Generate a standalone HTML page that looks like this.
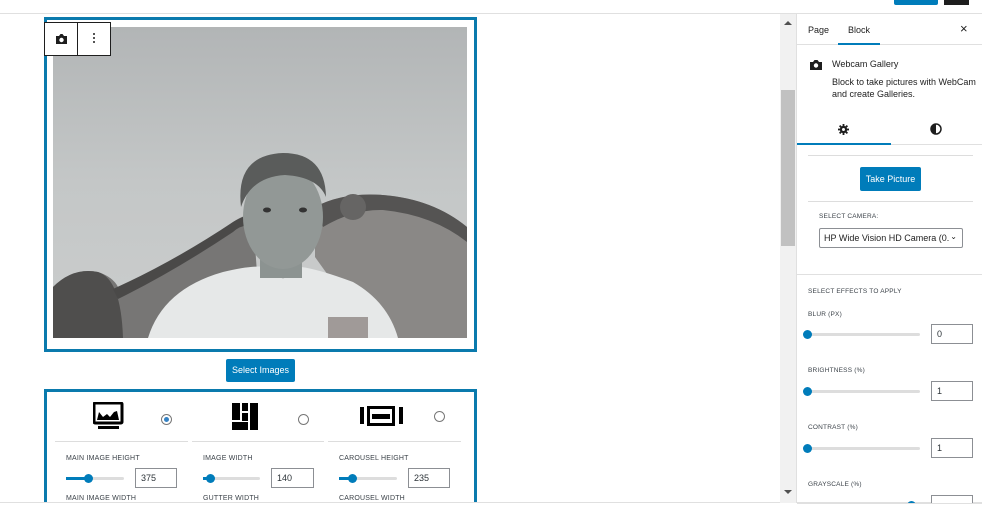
<!DOCTYPE html>
<html><head><style>
*{box-sizing:border-box;margin:0;padding:0}
html,body{width:982px;height:513px;overflow:hidden}
body{background:#fff;font-family:"Liberation Sans",sans-serif;position:relative;color:#1e1e1e}
.a{position:absolute}
.lbl{font-size:7px;color:#3c434a;letter-spacing:.2px}
.inp{position:absolute;border:1px solid #8c8f94;background:#fff;font-size:9px;padding:4px 0 0 5px;color:#2c3338}
.track{position:absolute;height:3px;background:#ddd;border-radius:2px}
.dot{position:absolute;width:9px;height:9px;border-radius:50%;background:#007cba}
.fill{position:absolute;height:3px;background:#007cba}
</style></head><body>
<div class="a" style="left:0;top:13px;width:982px;height:1px;background:#e0e0e0"></div>
<div class="a" style="left:894px;top:0;width:44px;height:5px;background:#007cba;border-radius:0 0 2px 2px"></div>
<div class="a" style="left:944px;top:0;width:25px;height:5px;background:#1e1e1e"></div>

<div class="a" style="left:44px;top:17px;width:433px;height:335px;border:3px solid #0a7aad"></div>
<div class="a" style="left:53px;top:27px;width:414px;height:311px;background:linear-gradient(#b2b5b6,#c4c7c7 50%,#cbcdcd);overflow:hidden">
 <svg width="414" height="311" viewBox="0 0 414 311">
  <path d="M0 311 L0 260 Q20 240 45 245 Q60 250 65 260 Q120 240 180 195 Q195 185 200 190 L205 260 L110 311Z" fill="#777675"/>
  <path d="M0 311 L0 260 Q20 240 45 245 Q68 252 70 311Z" fill="#4f4e4d"/>
  <path d="M60 262 Q120 235 180 195 Q195 186 200 190 L200 200 Q190 196 180 205 Q120 245 65 272Z" fill="#4a4948"/>
  <path d="M262 180 Q290 165 330 168 Q380 172 414 200 L414 311 L320 311 L262 230Z" fill="#8a8886"/>
  <path d="M262 180 Q290 165 330 168 Q380 172 414 200 L414 215 Q380 188 330 183 Q300 182 270 200Z" fill="#555453"/>
  <circle cx="300" cy="180" r="13" fill="#666564"/>
  <path d="M95 311 Q110 262 170 245 Q200 238 212 240 L230 252 L248 240 Q265 242 300 255 Q335 275 345 311Z" fill="#e6e8e8"/>
  <rect x="207" y="225" width="42" height="26" fill="#8c9391"/>
  <ellipse cx="230" cy="190" rx="40" ry="52" fill="#929896"/>
  <path d="M188 180 Q182 128 230 126 Q272 126 273 170 Q265 150 232 148 Q198 150 188 180Z" fill="#5a5c5b"/>
  <ellipse cx="214" cy="183" rx="4" ry="2.5" fill="#333"/><ellipse cx="250" cy="183" rx="4" ry="2.5" fill="#333"/>
  <rect x="275" y="290" width="40" height="21" fill="#a09a98"/>
 </svg>
</div>
<div class="a" style="left:44px;top:22px;width:67px;height:34px;border:1px solid #1e1e1e;background:#fff"></div>
<div class="a" style="left:77px;top:22px;width:1px;height:34px;background:#1e1e1e"></div>
<svg class="a" style="left:55px;top:33px" width="13" height="12" viewBox="0 0 13 12"><path d="M1 3h3l1.5-2h2L9 3h3v8H1z" fill="#1e1e1e"/><circle cx="6.5" cy="7" r="2.2" fill="#fff"/></svg>
<div class="a" style="left:93px;top:33px;width:2px;height:2px;background:#555;box-shadow:0 4px #555,0 8px #555"></div>

<div class="a" style="left:226px;top:359px;width:69px;height:23px;background:#007cba;border-radius:2px;color:#fff;font-size:9px;text-align:center;line-height:23px">Select Images</div>

<div class="a" style="left:44px;top:389px;width:433px;height:130px;border:3px solid #0a7aad"></div>
<svg class="a" style="left:93px;top:402px" width="31" height="30" viewBox="0 0 31 30"><rect x="1" y="1" width="28" height="20" rx="1" fill="none" stroke="#000" stroke-width="3"/><path d="M4 18 L6 10 L10 15 L14 12 L17 15 L21 10 L24 9 L26 18Z" fill="#000"/><rect x="5" y="24" width="21" height="3" fill="#000"/></svg>
<svg class="a" style="left:231px;top:403px" width="28" height="28" viewBox="0 0 28 28"><rect x="1" y="0" width="8" height="17" fill="#000"/><rect x="11" y="0" width="6" height="8" fill="#000"/><rect x="11" y="10" width="6" height="8" fill="#000"/><rect x="19" y="0" width="8" height="27" fill="#000"/><rect x="1" y="19" width="16" height="8" fill="#000"/></svg>
<svg class="a" style="left:360px;top:406px" width="44" height="21" viewBox="0 0 44 21"><rect x="0" y="1" width="4" height="17" fill="#000"/><rect x="7" y="0" width="28" height="20" fill="#000"/><rect x="10" y="3" width="22" height="14" fill="#fff"/><rect x="12" y="8" width="18" height="5" fill="#000"/><rect x="39" y="1" width="4" height="17" fill="#000"/></svg>
<div class="a" style="left:161px;top:414px;width:11px;height:11px;border:1px solid #777;border-radius:50%;background:#fff"><div style="position:absolute;left:2px;top:2px;width:5px;height:5px;border-radius:50%;background:#3582c4"></div></div>
<div class="a" style="left:298px;top:414px;width:11px;height:11px;border:1px solid #777;border-radius:50%"></div>
<div class="a" style="left:434px;top:411px;width:11px;height:11px;border:1px solid #777;border-radius:50%"></div>
<div class="a" style="left:55px;top:441px;width:133px;height:1px;background:#ddd"></div>
<div class="a" style="left:192px;top:441px;width:132px;height:1px;background:#ddd"></div>
<div class="a" style="left:328px;top:441px;width:133px;height:1px;background:#ddd"></div>

<div class="a lbl" style="left:66px;top:455px">MAIN IMAGE HEIGHT</div>
<div class="track" style="left:66px;top:477px;width:58px"></div><div class="fill" style="left:66px;top:477px;width:22px"></div><div class="dot" style="left:84px;top:474px"></div>
<div class="inp" style="left:135px;top:468px;width:42px;height:20px">375</div>
<div class="a lbl" style="left:66px;top:495px">MAIN IMAGE WIDTH</div>

<div class="a lbl" style="left:203px;top:455px">IMAGE WIDTH</div>
<div class="track" style="left:203px;top:477px;width:57px"></div><div class="fill" style="left:203px;top:477px;width:8px"></div><div class="dot" style="left:206px;top:474px"></div>
<div class="inp" style="left:271px;top:468px;width:43px;height:20px">140</div>
<div class="a lbl" style="left:203px;top:495px">GUTTER WIDTH</div>

<div class="a lbl" style="left:339px;top:455px">CAROUSEL HEIGHT</div>
<div class="track" style="left:339px;top:477px;width:58px"></div><div class="fill" style="left:339px;top:477px;width:12px"></div><div class="dot" style="left:348px;top:474px"></div>
<div class="inp" style="left:408px;top:468px;width:42px;height:20px">235</div>
<div class="a lbl" style="left:339px;top:495px">CAROUSEL WIDTH</div>

<div class="a" style="left:0;top:502px;width:982px;height:11px;background:#fff;border-top:1px solid #e0e0e0"></div>

<div class="a" style="left:780px;top:14px;width:16px;height:489px;background:#f1f1f1"></div>
<div class="a" style="left:781px;top:90px;width:14px;height:156px;background:#c1c1c1"></div>
<div class="a" style="left:784px;top:21px;width:0;height:0;border-left:4px solid transparent;border-right:4px solid transparent;border-bottom:4px solid #505050"></div>
<div class="a" style="left:784px;top:490px;width:0;height:0;border-left:4px solid transparent;border-right:4px solid transparent;border-top:4px solid #505050"></div>

<div class="a" style="left:796px;top:14px;width:1px;height:489px;background:#e0e0e0"></div>
<div class="a" style="left:808px;top:25px;font-size:9px">Page</div>
<div class="a" style="left:848px;top:25px;font-size:9px">Block</div>
<div class="a" style="left:797px;top:44px;width:185px;height:1px;background:#e0e0e0"></div>
<div class="a" style="left:838px;top:43px;width:42px;height:2px;background:#007cba"></div>
<div class="a" style="left:960px;top:21px;font-size:13px">×</div>
<svg class="a" style="left:810px;top:59px" width="12" height="11" viewBox="0 0 12 11"><path d="M0 3h3l1.5-2h3L9 3h3v8H0z" fill="#1e1e1e"/><circle cx="6" cy="6.5" r="2.2" fill="#fff"/></svg>
<div class="a" style="left:832px;top:59px;font-size:9px">Webcam Gallery</div>
<div class="a" style="left:832px;top:76px;font-size:9px;line-height:12px;width:145px">Block to take pictures with WebCam and create Galleries.</div>
<svg class="a" style="left:838px;top:124px" width="11" height="11" viewBox="0 0 12 12"><g fill="#1e1e1e"><circle cx="6" cy="6" r="4"/><rect x="5" y="0" width="2" height="12"/><rect x="0" y="5" width="12" height="2"/><rect x="5" y="0" width="2" height="12" transform="rotate(45 6 6)"/><rect x="5" y="0" width="2" height="12" transform="rotate(-45 6 6)"/></g><circle cx="6" cy="6" r="1.6" fill="#fff"/></svg>
<svg class="a" style="left:930px;top:123px" width="12" height="12" viewBox="0 0 12 12"><circle cx="6" cy="6" r="5" fill="none" stroke="#1e1e1e" stroke-width="1.5"/><path d="M6 1a5 5 0 0 0 0 10z" fill="#1e1e1e"/></svg>
<div class="a" style="left:797px;top:144px;width:185px;height:1px;background:#e0e0e0"></div>
<div class="a" style="left:797px;top:143px;width:94px;height:2px;background:#007cba"></div>
<div class="a" style="left:808px;top:155px;width:165px;height:1px;background:#ddd"></div>
<div class="a" style="left:860px;top:167px;width:61px;height:24px;background:#007cba;border-radius:2px;color:#fff;font-size:9px;text-align:center;line-height:24px">Take Picture</div>
<div class="a" style="left:808px;top:201px;width:165px;height:1px;background:#ddd"></div>
<div class="a lbl" style="left:819px;top:213px;font-size:6.5px">SELECT CAMERA:</div>
<div class="a" style="left:819px;top:228px;width:144px;height:20px;border:1px solid #8c8f94;border-radius:2px;font-size:9px;padding:4px 0 0 4px;white-space:nowrap;overflow:hidden">HP Wide Vision HD Camera (0...<span style="position:absolute;right:5px;top:3px;font-size:8px;background:#fff">⌄</span></div>
<div class="a" style="left:797px;top:274px;width:185px;height:1px;background:#e0e0e0"></div>
<div class="a lbl" style="left:808px;top:288px;font-size:6.5px">SELECT EFFECTS TO APPLY</div>

<div class="a lbl" style="left:808px;top:311px;font-size:6.5px">BLUR (PX)</div>
<div class="track" style="left:808px;top:333px;width:112px"></div><div class="dot" style="left:803px;top:330px"></div>
<div class="inp" style="left:931px;top:324px;width:42px;height:20px">0</div>

<div class="a lbl" style="left:808px;top:367px;font-size:6.5px">BRIGHTNESS (%)</div>
<div class="track" style="left:808px;top:390px;width:112px"></div><div class="dot" style="left:803px;top:387px"></div>
<div class="inp" style="left:931px;top:381px;width:42px;height:20px">1</div>

<div class="a lbl" style="left:808px;top:424px;font-size:6.5px">CONTRAST (%)</div>
<div class="track" style="left:808px;top:447px;width:112px"></div><div class="dot" style="left:803px;top:444px"></div>
<div class="inp" style="left:931px;top:438px;width:42px;height:20px">1</div>

<div class="a lbl" style="left:808px;top:481px;font-size:6.5px">GRAYSCALE (%)</div>
<div class="dot" style="left:907px;top:501px"></div>
<div class="inp" style="left:931px;top:495px;width:42px;height:20px"></div>
<div class="a" style="left:797px;top:503px;width:185px;height:10px;background:#fff;border-top:1px solid #e0e0e0"></div>
</body></html>
